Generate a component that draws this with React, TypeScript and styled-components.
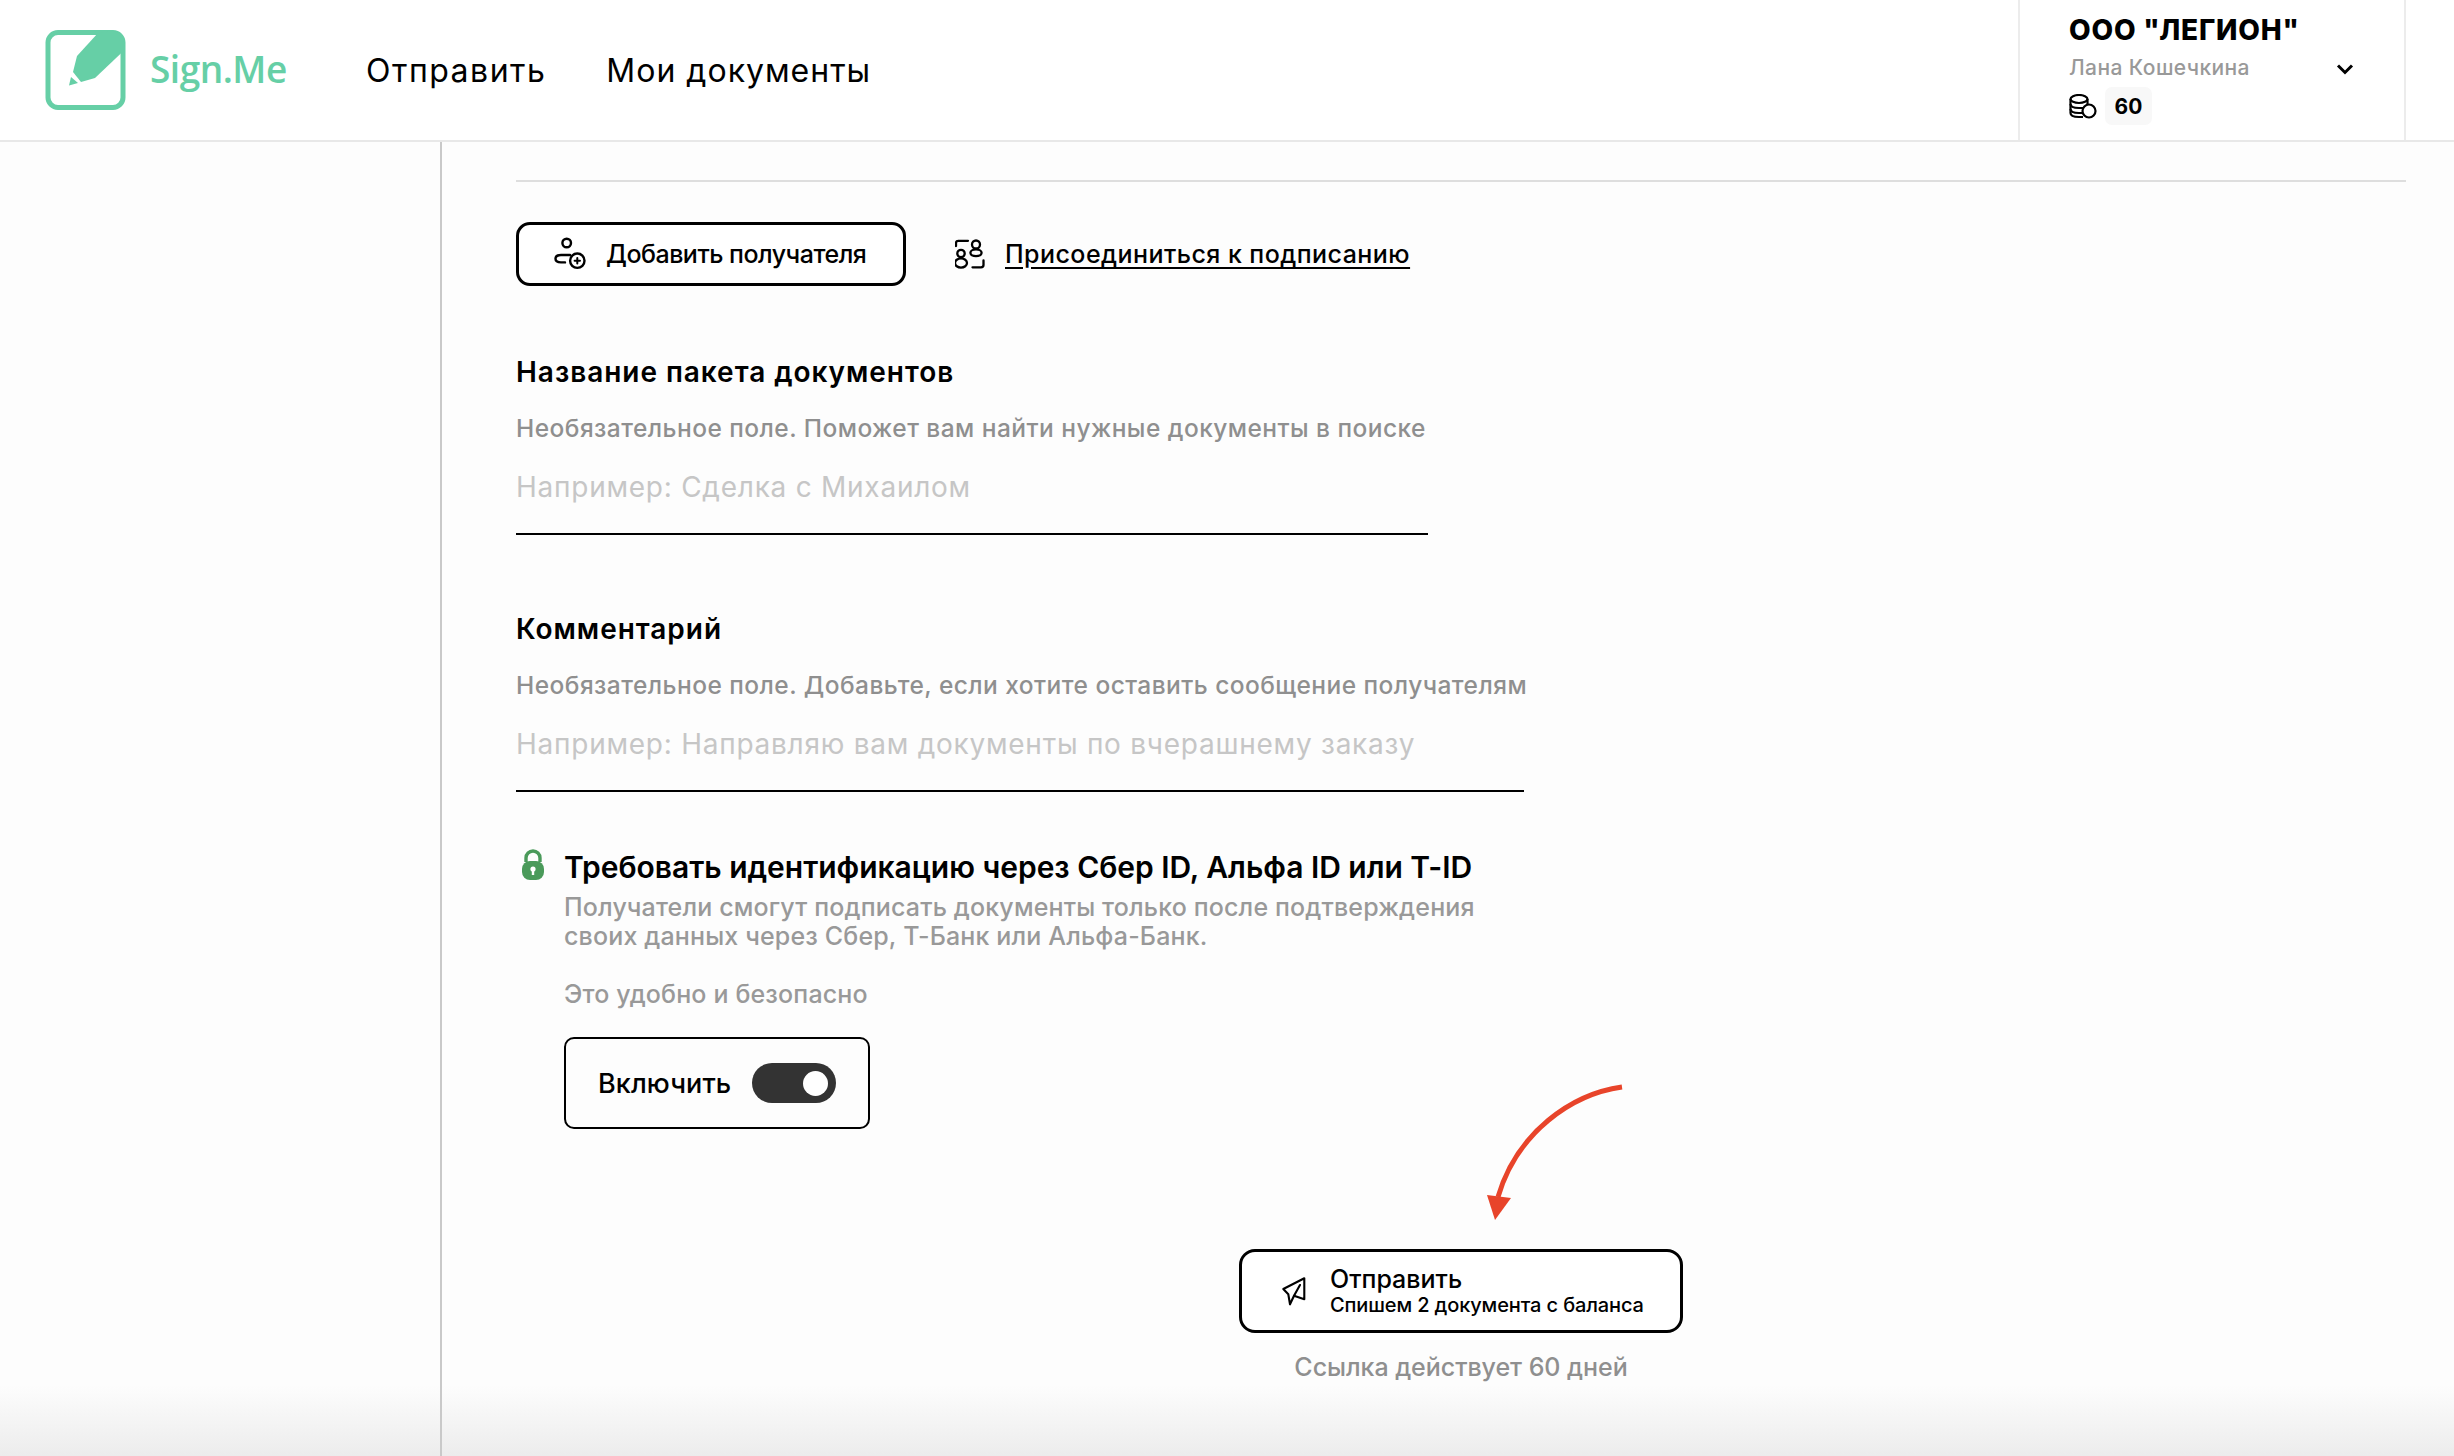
import React from "react";
import styled, { createGlobalStyle } from "styled-components";

const Global = createGlobalStyle`
  html, body { margin: 0; padding: 0; background: #fdfdfd; }
  body { font-family: "Inter", "Noto Sans", "Liberation Sans", sans-serif; color: #000; }
  * { box-sizing: border-box; }
`;

const Page = styled.div`
  width: 2454px;
  height: 1456px;
  overflow: hidden;
  display: flex;
  flex-direction: column;
  background: linear-gradient(to bottom, #fdfdfd 0, #fdfdfd 1385px, #ececec 1456px);
`;

const Header = styled.header`
  height: 142px;
  flex: none;
  display: flex;
  align-items: stretch;
  background: #fff;
  border-bottom: 2px solid #e8e8e8;
  padding-right: 48px;
`;

const LogoBox = styled.div`
  display: flex;
  align-items: center;
  padding-left: 35px;
  width: 366px;
  flex: none;
`;

const LogoText = styled.span`
  font-family: "Open Sans", sans-serif;
  font-size: 37px;
  line-height: 44px;
  margin-bottom: 3px;
  font-weight: 600;
  color: #66cfa6;
  margin-left: 15px;
  letter-spacing: -0.5px;
`;

const Nav = styled.nav`
  display: flex;
  align-items: center;
  gap: 60px;
  flex: 1;
`;

const NavItem = styled.a<{ $spacing: number }>`
  font-size: 32px;
  font-weight: 400;
  letter-spacing: ${(p) => p.$spacing}px;
  color: #000;
`;

const Account = styled.div`
  width: 388px;
  flex: none;
  border-left: 2px solid #ececec;
  border-right: 2px solid #ececec;
  padding: 14px 0 0 49px;
  position: relative;
`;

const Org = styled.div`
  font-size: 28px;
  line-height: 32px;
  font-weight: 800;
  letter-spacing: 0.8px;
`;

const Person = styled.div`
  font-size: 21px;
  line-height: 26px;
  margin-top: 9px;
  font-weight: 500;
  color: #999;
  letter-spacing: 0.4px;
`;

const Balance = styled.div`
  display: flex;
  align-items: center;
  gap: 8px;
  margin-top: 6px;
`;

const Badge = styled.span`
  background: #f8f8f8;
  border-radius: 7px;
  width: 47px;
  height: 38px;
  display: flex;
  align-items: center;
  justify-content: center;
  font-size: 21px;
  font-weight: 700;
`;

const Chevron = styled.svg`
  position: absolute;
  left: 316px;
  top: 63px;
`;

const Body = styled.div`
  flex: 1;
  display: flex;
  min-height: 0;
`;

const Sidebar = styled.aside`
  width: 442px;
  flex: none;
  border-right: 2px solid #c9c9c9;
`;

const Content = styled.main`
  flex: 1;
  padding: 38px 48px 0 74px;
  position: relative;
`;

const Rule = styled.hr`
  margin: 0;
  border: 0;
  height: 2px;
  background: #dedede;
`;

const Actions = styled.div`
  display: flex;
  align-items: center;
  margin-top: 40px;
`;

const AddButton = styled.button`
  width: 390px;
  height: 64px;
  border: 3px solid #000;
  border-radius: 14px;
  background: #fff;
  display: flex;
  align-items: center;
  padding: 0 0 0 35px;
  gap: 19px;
  font: 500 25px "Inter", sans-serif;
  letter-spacing: -0.5px;
  color: #000;
`;

const JoinLink = styled.a`
  display: flex;
  align-items: center;
  gap: 20px;
  margin-left: 49px;
  font-size: 25px;
  font-weight: 500;
  letter-spacing: 0.45px;
  span { text-decoration: underline; text-underline-offset: 4px; }
`;

const Field = styled.section<{ $width: number; $top: number }>`
  width: ${(p) => p.$width}px;
  margin-top: ${(p) => p.$top}px;
`;

const FieldTitle = styled.h3`
  margin: 0;
  font-size: 28px;
  line-height: 34px;
  font-weight: 600;
  letter-spacing: 0.96px;
`;

const Hint = styled.p`
  margin: 24px 0 0;
  font-size: 24.5px;
  line-height: 30px;
  font-weight: 500;
  color: #8f8f8f;
  white-space: nowrap;
  letter-spacing: 0.45px;
`;

const Input = styled.div`
  margin-top: 26px;
  height: 66px;
  border-bottom: 2px solid #000;
  font-size: 28px;
  line-height: 36px;
  color: #c6c6c6;
  white-space: nowrap;
  letter-spacing: 0.75px;
`;

const Identify = styled.section`
  margin-top: 57px;
  display: flex;
  gap: 19px;
`;

const LockIcon = styled.svg`
  flex: none;
  margin: 0 0 0 5px;
`;

const IdColumn = styled.div`
  display: flex;
  flex-direction: column;
  align-items: flex-start;
`;

const IdTitle = styled.h3`
  margin: 0;
  font-size: 30px;
  line-height: 36px;
  font-weight: 600;
  letter-spacing: -0.03px;
  white-space: nowrap;
`;

const IdText = styled.p<{ $top: number }>`
  margin: ${(p) => p.$top}px 0 0;
  font-size: 25px;
  line-height: 29px;
  font-weight: 500;
  color: #999;
  white-space: nowrap;
  letter-spacing: 0.15px;
`;

const ToggleBox = styled.div`
  margin-top: 28px;
  width: 306px;
  height: 92px;
  border: 2px solid #000;
  border-radius: 10px;
  display: flex;
  align-items: center;
  padding-left: 32px;
  gap: 21px;
  font-size: 27px;
  font-weight: 500;
  letter-spacing: 0.1px;
`;

const Toggle = styled.span`
  width: 84px;
  height: 40px;
  border-radius: 20px;
  background: #333;
  display: flex;
  align-items: center;
  justify-content: flex-end;
  padding-right: 8px;
`;

const Knob = styled.span`
  width: 25px;
  height: 25px;
  border-radius: 50%;
  background: #fff;
`;

const SendBlock = styled.div`
  margin: 0 0 0 723px;
  width: 444px;
  display: flex;
  flex-direction: column;
  align-items: center;
`;

const SendButton = styled.button`
  margin-top: 120px;
  width: 444px;
  height: 84px;
  border: 3px solid #000;
  border-radius: 16px;
  background: #fff;
  display: flex;
  align-items: center;
  padding: 0 0 0 39px;
  gap: 23px;
  color: #000;
  font-family: "Inter", sans-serif;
  text-align: left;
`;

const SendLabel = styled.span`
  display: block;
  font-size: 25px;
  line-height: 28px;
  font-weight: 500;
  letter-spacing: 0;
`;

const SendSub = styled.span`
  display: block;
  font-size: 20px;
  line-height: 24px;
  font-weight: 500;
  letter-spacing: -0.13px;
  white-space: nowrap;
`;

const Validity = styled.div`
  margin-top: 19px;
  font-size: 25px;
  line-height: 30px;
  font-weight: 500;
  color: #8f8f8f;
  letter-spacing: -0.05px;
`;

const Arrow = styled.svg`
  position: absolute;
  left: 1030px;
  top: 930px;
`;

const Logo = () => (
  <svg width="100" height="100" viewBox="0 0 100 100" style={{ flex: "none" }}>
    <rect x="13" y="12.5" width="75" height="75" rx="10" fill="none" stroke="#66cfa6" strokeWidth="5" />
    <path d="M63 13 L80 11 Q90 13 89.5 30 L60 58 L46 62 L38 52 L42 36 Z" fill="#66cfa6" />
    <path d="M36 57 L43 63 L34 65.5 Z" fill="#66cfa6" />
  </svg>
);

const AddIcon = () => (
  <svg width="33" height="34" viewBox="9 8 33 34" fill="none" stroke="#000" strokeWidth="2.4" strokeLinecap="round" style={{ flex: "none" }}>
    <circle cx="21.7" cy="14" r="4.3" />
    <path d="M25 26 H16 Q10.5 26 10.5 29.8 Q10.5 33.4 16 33.4 H20" />
    <circle cx="32.3" cy="31.7" r="7.2" />
    <path d="M32.3 29 V34.4 M29.6 31.7 H35" strokeWidth="2" />
  </svg>
);

const JoinIcon = () => (
  <svg width="30" height="32" viewBox="11 8 30 32" fill="none" stroke="#000" strokeWidth="2.3" strokeLinecap="round" style={{ flex: "none" }}>
    <path d="M12 16 V13 Q12 10.8 14.2 10.8 H24" />
    <path d="M39.5 30.5 V35 Q39.5 37.3 37 37.3 H28.5" />
    <circle cx="32" cy="14.5" r="4" />
    <ellipse cx="32" cy="22.8" rx="5.6" ry="3.4" />
    <circle cx="17" cy="23.5" r="3.7" />
    <ellipse cx="17" cy="33" rx="6" ry="4.6" />
  </svg>
);

const CoinsIcon = () => (
  <svg width="28" height="25" viewBox="0 0 28 25" fill="none" stroke="#000" strokeWidth="2.2" style={{ flex: "none" }}>
    <ellipse cx="10" cy="5" rx="8.5" ry="4" />
    <path d="M1.5 5 V19 Q1.5 23 10 23 H14" />
    <path d="M1.5 10 Q1.5 14 10 14 H14 M1.5 15 Q1.5 19 10 19 H13 M18.5 5 V11" />
    <circle cx="20" cy="17" r="6.5" fill="#fff" />
  </svg>
);

const SendIcon = () => (
  <svg width="26" height="31" viewBox="11 11 26 31" fill="none" stroke="#000" strokeWidth="2.1" strokeLinejoin="round" strokeLinecap="round" style={{ flex: "none" }}>
    <path d="M13.3 24 L34.3 13.3 V34.3 L24 30.7 L20 39.3 L18.3 29.3 Z" />
    <path d="M24 30.7 L30 20" />
  </svg>
);

export default function App() {
  return (
    <Page>
      <Global />
      <Header>
        <LogoBox>
          <Logo />
          <LogoText>Sign.Me</LogoText>
        </LogoBox>
        <Nav>
          <NavItem $spacing={1.5}>Отправить</NavItem>
          <NavItem $spacing={1}>Мои документы</NavItem>
        </Nav>
        <Account>
          <Org>ООО "ЛЕГИОН"</Org>
          <Person>Лана Кошечкина</Person>
          <Balance>
            <CoinsIcon />
            <Badge>60</Badge>
          </Balance>
          <Chevron width="18" height="12" viewBox="0 0 18 12" fill="none" stroke="#000" strokeWidth="3">
            <path d="M2 2.5 L9 9.5 L16 2.5" />
          </Chevron>
        </Account>
      </Header>
      <Body>
        <Sidebar />
        <Content>
          <Rule />
          <Actions>
            <AddButton>
              <AddIcon />
              Добавить получателя
            </AddButton>
            <JoinLink>
              <JoinIcon />
              <span>Присоединиться к подписанию</span>
            </JoinLink>
          </Actions>
          <Field $width={912} $top={69}>
            <FieldTitle>Название пакета документов</FieldTitle>
            <Hint>Необязательное поле. Поможет вам найти нужные документы в поиске</Hint>
            <Input>Например: Сделка с Михаилом</Input>
          </Field>
          <Field $width={1008} $top={77}>
            <FieldTitle>Комментарий</FieldTitle>
            <Hint>Необязательное поле. Добавьте, если хотите оставить сообщение получателям</Hint>
            <Input>Например: Направляю вам документы по вчерашнему заказу</Input>
          </Field>
          <Identify>
            <LockIcon width="24" height="32" viewBox="0 0 24 32">
              <path d="M5 13 V9 a7 7 0 0 1 14 0 V13" fill="none" stroke="#4a9a5a" strokeWidth="3.4" />
              <rect x="1" y="12" width="22" height="19" rx="8" fill="#4a9a5a" />
              <circle cx="12" cy="20" r="2.6" fill="#fff" />
              <rect x="10.8" y="20" width="2.4" height="6" fill="#fff" />
            </LockIcon>
            <IdColumn>
              <IdTitle>Требовать идентификацию через Сбер ID, Альфа ID или T-ID</IdTitle>
              <IdText $top={8}>Получатели смогут подписать документы только после подтверждения</IdText>
              <IdText $top={0}>своих данных через Сбер, Т-Банк или Альфа-Банк.</IdText>
              <IdText $top={29}>Это удобно и безопасно</IdText>
              <ToggleBox>
                Включить
                <Toggle>
                  <Knob />
                </Toggle>
              </ToggleBox>
            </IdColumn>
          </Identify>
          <SendBlock>
            <SendButton>
              <SendIcon />
              <span>
                <SendLabel>Отправить</SendLabel>
                <SendSub>Спишем 2 документа с баланса</SendSub>
              </span>
            </SendButton>
            <Validity>Ссылка действует 60 дней</Validity>
          </SendBlock>
          <Arrow width="160" height="150" viewBox="0 0 160 150" fill="none">
            <path d="M150 15 C100 22 45 60 26 125" stroke="#e8442a" strokeWidth="5" />
            <path d="M15 123 L39 126 L23 148 Z" fill="#e8442a" />
          </Arrow>
        </Content>
      </Body>
    </Page>
  );
}
